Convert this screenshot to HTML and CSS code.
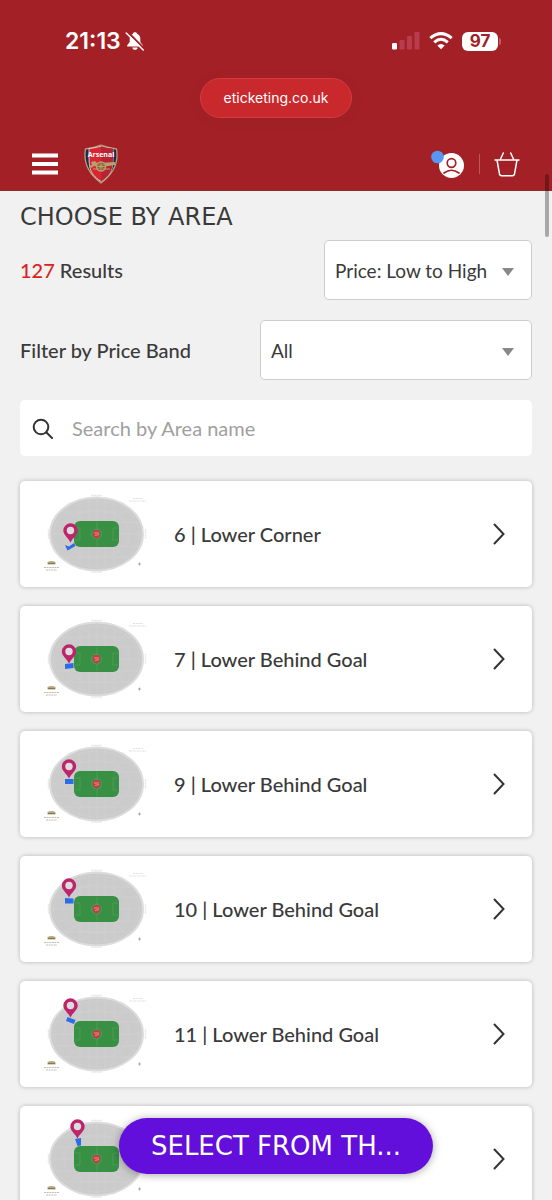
FILE: index.html
```html
<!DOCTYPE html>
<html lang="en">
<head>
    <meta charset="UTF-8">
    <meta name="viewport" content="width=device-width, initial-scale=1.0">
    <title>Choose by Area</title>
    <link rel="stylesheet" href="styles.css">
</head>
<body>
    <!-- Shared drawings -->
    <svg class="sprite" aria-hidden="true">
        <symbol id="stadium" viewBox="0 0 110 84">
            <ellipse cx="56.500" cy="42" rx="46.500" ry="36.500" fill="#cbcbcb" stroke="#dcdcdc" stroke-width="2"/>
            <g fill="none" stroke="#d3d3d3" stroke-width=".5">
                <path d="M40 10v64M49 7v70M57 7v70M65 7v70M74 10v64M22 20h69M14 30h85M12 42h89M14 54h85M22 65h69M25 16l63 52M88 16L25 68"/>
                <ellipse cx="56.500" cy="42" rx="43" ry="33"/>
                <ellipse cx="56.500" cy="42" rx="33" ry="24"/>
            </g>
            <rect x="34" y="29" width="45" height="26" rx="6" fill="#389044"/>
            <path d="M35 36h5v12h-5M78 36h-5v12h5M57 30v24" fill="none" stroke="#5da263" stroke-width=".6"/>
            <circle cx="56.500" cy="42" r="5" fill="none" stroke="#5da263" stroke-width=".6"/>
            <path d="M53 38.500q3.500-1 7 0q1 6-3.500 8.500q-4.500-2.500-3.500-8.500z" fill="#c93c42"/>
            <path d="M54 41h5M55 43.500l4-1" stroke="#e4a79b" stroke-width=".8"/>
            <path d="M51 3.500h11M51 80h11M8.500 37v10M105.500 37v10" stroke="#e6e6e6" stroke-width="1.500" stroke-dasharray="1.500 .5"/>
            <path d="M93 6.500h10M89 9h17" stroke="#e0e0e0" stroke-width="1.200" stroke-dasharray="2 .6"/>
            <path d="M7.500 70q4-2 8 0v2.500h-8z" fill="#b8a67d"/>
            <path d="M8 71.500h7" stroke="#746d50" stroke-width=".8"/>
            <path d="M4 75.500h15M6 78h11" stroke="#c6bdb0" stroke-dasharray="2 .6"/>
            <path d="M98 72h3M99.500 70.500v3" stroke="#999" stroke-width=".8"/>
        </symbol>
        <symbol id="pin" viewBox="0 0 16 20" overflow="visible">
            <path d="M8 19.500C6 15 .8 12 .8 7.500a7.200 7.200 0 0 1 14.400 0C15.200 12 10 15 8 19.500z" fill="#bd246c"/>
            <circle cx="8" cy="7.500" r="3.700" fill="#ddd"/>
        </symbol>
        <symbol id="chevron" viewBox="0 0 12 22">
            <path d="M1.500 1.500L10.500 11L1.500 20.500" fill="none" stroke="#333" stroke-width="2" stroke-linecap="round"/>
        </symbol>
    </svg>

    <div class="app">
        <header class="header">
            <div class="status">
                <span class="status-time">21:13</span>
                <svg class="icon-bell" width="20" height="20" viewBox="0 0 20 20">
                    <path d="M10 1.200c1.200 0 2 .7 2.300 1.700 2 .9 3 2.700 3 5v3.200l2.500 3.200v1.200H2.200v-1.200l2.500-3.200V7.900c0-2.300 1-4.100 3-5C8 1.900 8.800 1.200 10 1.200zM7.300 16.500h5.400c-.2 1.400-1.200 2.300-2.700 2.300s-2.500-.9-2.700-2.300z" fill="#fff"/>
                    <path d="M2.700 1L19.300 17.600" stroke="#a32126" stroke-width="2"/>
                    <path d="M1.200 2L18.200 19" stroke="#fff" stroke-width="1.500" stroke-linecap="round"/>
                </svg>
                <svg class="icon-signal" width="28" height="18" viewBox="0 0 28 18">
                    <rect x="0" y="11" width="5" height="6.500" rx="1.200" fill="#fff"/>
                    <g fill="#b83d4c">
                        <rect x="7.500" y="8" width="5" height="9.500" rx="1.200"/>
                        <rect x="15" y="4" width="5" height="13.500" rx="1.200"/>
                        <rect x="22.500" y="0" width="5" height="17.500" rx="1.200"/>
                    </g>
                </svg>
                <svg width="24" height="18" viewBox="0 0 24 18">
                    <g fill="none" stroke="#fff" stroke-width="3">
                        <path d="M1.300 6.200Q12-3 22.700 6.200"/>
                        <path d="M5.200 10.300Q12 4.300 18.800 10.300"/>
                    </g>
                    <path d="M8.300 13.500Q12 10.500 15.700 13.500L12 17.300z" fill="#fff"/>
                </svg>
                <span class="battery">97</span>
            </div>
            <a class="address" href="#">eticketing.co.uk</a>
            <nav class="nav">
                <button class="icon-button" aria-label="Menu">
                    <svg width="26" height="22" viewBox="0 0 26 22"><path d="M0 2.500h26M0 11h26M0 19.500h26" stroke="#fff" stroke-width="4"/></svg>
                </button>
                <a class="crest" href="#" aria-label="Home">
                    <svg width="34" height="40" viewBox="0 0 34 40">
                        <path d="M1.500 5Q9 4 17 1Q25 4 32.500 5Q36 25 17 39Q-2 25 1.500 5Z" fill="#192b55" stroke="#b9a16d" stroke-width="1.300"/>
                        <path d="M5 4.500Q11 4 17 2.200Q23 4 29 4.500C29 22 30 29 17 37.500C4 29 5 22 5 4.500Z" fill="#db2430" stroke="#eee" stroke-width=".8"/>
                        <path d="M17 2.200Q23 4 29 4.500C29 22 30 29 17 37.500Z" fill="#b82232"/>
                        <text x="17" y="12.500" text-anchor="middle" class="crest-text">Arsenal</text>
                        <path d="M7 18l4-1 2 2 18-1v3l-13 2-8-1-3 2-2-2 3-1z" fill="#b5a169"/>
                        <circle cx="17" cy="22.500" r="4.500" fill="#94533b" stroke="#b5a169" stroke-width="1.500"/>
                        <path d="M17 18v9M12.500 22.500h9M14 19.500l6 6M20 19.500l-6 6M9 25h4M20 25h6" stroke="#b5a169"/>
                    </svg>
                </a>
                <button class="icon-button account" aria-label="Account">
                    <svg width="34" height="30" viewBox="0 0 34 30">
                        <circle cx="20.500" cy="16.500" r="12.500" fill="#fff"/>
                        <g fill="none" stroke="#a32126" stroke-width="1.700" stroke-linecap="round">
                            <circle cx="20.500" cy="14" r="4.300"/>
                            <path d="M13 24Q20.500 18.500 28 24"/>
                        </g>
                        <circle cx="6.500" cy="8" r="6.300" fill="#5796f3"/>
                    </svg>
                </button>
                <span class="divider"></span>
                <button class="icon-button" aria-label="Basket">
                    <svg width="26" height="26" viewBox="0 0 26 26">
                        <path d="M1 9h24M3 9l2.500 14q.4 1.700 2 1.700h11q1.600 0 2-1.700L23 9M6.300 8.500l3-6.500M19.700 8.500l-3-6.500" fill="none" stroke="#fff" stroke-width="1.500" stroke-linecap="round"/>
                    </svg>
                </button>
            </nav>
        </header>

        <main class="main">
            <h1>CHOOSE BY AREA</h1>
            <div class="row">
                <label for="sort"><span class="count">127</span> Results</label>
                <span class="select select-sort">
                    <select id="sort"><option>Price: Low to High</option></select>
                </span>
            </div>
            <div class="row">
                <label for="band">Filter by Price Band</label>
                <span class="select select-band">
                    <select id="band"><option>All</option></select>
                </span>
            </div>
            <div class="search">
                <svg width="22" height="22" viewBox="0 0 22 22"><g fill="none" stroke="#333" stroke-width="2" stroke-linecap="round"><circle cx="9" cy="10" r="7.300"/><path d="M14.500 15.500l5.500 5.500"/></g></svg>
                <input type="text" placeholder="Search by Area name" aria-label="Search by Area name">
            </div>

            <div class="areas">
                <a class="area" href="#">
                    <svg class="map" viewBox="0 0 110 84"><use href="#stadium"/><path d="M25 53l4 1.500 5-3.500 1.500 3-8 4.500z" fill="#2e6ce5"/><use href="#pin" x="22.500" y="31" width="16" height="20"/></svg>
                    <span class="area-name">6 | Lower Corner</span>
                    <svg class="chevron"><use href="#chevron"/></svg>
                </a>
                <a class="area" href="#">
                    <svg class="map" viewBox="0 0 110 84"><use href="#stadium"/><path d="M25 47l8.500-1v5l-8.500 1z" fill="#2e6ce5"/><use href="#pin" x="21" y="27" width="16" height="20"/></svg>
                    <span class="area-name">7 | Lower Behind Goal</span>
                    <svg class="chevron"><use href="#chevron"/></svg>
                </a>
                <a class="area" href="#">
                    <svg class="map" viewBox="0 0 110 84"><use href="#stadium"/><path d="M25 37h8.500v5H25z" fill="#2e6ce5"/><use href="#pin" x="21" y="17" width="16" height="20"/></svg>
                    <span class="area-name">9 | Lower Behind Goal</span>
                    <svg class="chevron"><use href="#chevron"/></svg>
                </a>
                <a class="area" href="#">
                    <svg class="map" viewBox="0 0 110 84"><use href="#stadium"/><path d="M25 31l8.500.5v5H25z" fill="#2e6ce5"/><use href="#pin" x="21" y="11" width="16" height="20"/></svg>
                    <span class="area-name">10 | Lower Behind Goal</span>
                    <svg class="chevron"><use href="#chevron"/></svg>
                </a>
                <a class="area" href="#">
                    <svg class="map" viewBox="0 0 110 84"><use href="#stadium"/><path d="M27.500 25l8 3-1.500 4-8-3z" fill="#2e6ce5"/><use href="#pin" x="22.500" y="6" width="16" height="20"/></svg>
                    <span class="area-name">11 | Lower Behind Goal</span>
                    <svg class="chevron"><use href="#chevron"/></svg>
                </a>
                <a class="area" href="#" aria-label="Next area">
                    <svg class="map" viewBox="0 0 110 84"><use href="#stadium"/><path d="M35 22l6-1v7.500l-3.500.5z" fill="#2e6ce5"/><use href="#pin" x="29.500" y="2" width="16" height="20"/></svg>
                    <span class="area-name"></span>
                    <svg class="chevron"><use href="#chevron"/></svg>
                </a>
            </div>
        </main>
        <span class="scroll-thumb"></span>
        <button class="map-button">SELECT FROM TH...</button>
    </div>
</body>
</html>
```
FILE: styles.css
```css
* { box-sizing: border-box; }
body { margin: 0; font-family: Lato, "Open Sans", sans-serif; font-size: 20px; color: #3a3a3a; background-color: #f1f1f1; }
button, select, input { font: inherit; color: inherit; }
a { color: inherit; text-decoration: none; }
svg { display: block; flex: none; }
.sprite { position: absolute; width: 0; height: 0; }
.app { position: relative; display: flex; flex-direction: column; height: 100vh; overflow: hidden; }

/* Header */
.header { flex: none; display: flex; flex-direction: column; align-items: center; padding-top: 26px; background-color: #a32126; color: #fff; border-bottom: 1px solid #8e2d30; }
.status { display: flex; align-items: center; width: 100%; height: 30px; padding: 0 54px 0 65px; font-family: Inter, sans-serif; }
.status-time { font-size: 23px; font-weight: 600; }
.icon-bell { margin-left: 4px; }
.icon-signal { margin-left: auto; margin-right: 9px; }
.battery { position: relative; width: 36px; height: 19px; margin-left: 9px; border-radius: 6px; background-color: #fff; color: #a32126; font-size: 17px; font-weight: 700; line-height: 19px; text-align: center; }
.battery::after { content: ""; position: absolute; right: -3px; top: 6px; width: 2px; height: 7px; border-radius: 0 2px 2px 0; background-color: #bd5c64; }
.address { height: 40px; margin-top: 22px; padding: 0 23px; border: 1px solid #d93840; border-radius: 20px; background-color: #c9292d; box-shadow: 0 2px 16px rgba(0, 0, 0, 0.05); font-family: Inter, sans-serif; font-size: 14px; line-height: 38px; }
.nav { display: flex; align-items: center; width: 100%; padding: 26px 32px 6px; }
.icon-button { padding: 0; border: 0; background: none; cursor: pointer; }
.crest { margin-left: 26px; }
.crest-text { font: bold 7px "Open Sans", sans-serif; fill: #fff; }
.account { margin-left: auto; }
.divider { width: 1px; height: 20px; margin: 0 14px; background-color: #c25459; }

/* Filters */
.main { flex: 1; min-height: 0; overflow: hidden; padding: 11px 20px 0; }
h1 { margin: 0 0 8px; font-family: "DejaVu Sans", sans-serif; font-size: 24px; font-weight: 400; line-height: 30px; }
.row { display: flex; align-items: center; justify-content: space-between; height: 60px; margin-bottom: 20px; font-weight: 500; }
.count { color: #d9231f; }
.select { position: relative; height: 60px; font-size: 19px; font-weight: 400; }
.select::after { content: ""; position: absolute; right: 18px; top: 28px; border: 6px solid transparent; border-top: 8px solid #888; border-bottom: 0; }
.select-sort { width: 208px; }
.select-band { width: 272px; }
.select select { width: 100%; height: 100%; padding: 0 10px; border: 1px solid #ccc; border-radius: 5px; background-color: #fff; appearance: none; }
.search { display: flex; align-items: center; gap: 18px; height: 56px; padding: 0 12px; border-radius: 5px; background-color: #fff; }
.search input { flex: 1; min-width: 0; height: 100%; padding: 0; border: 0; outline: 0; background: none; }
.search input::placeholder { color: #a0a0a0; opacity: 1; }

/* Area list */
.areas { display: flex; flex-direction: column; gap: 19px; margin-top: 25px; }
.area { flex: none; display: flex; align-items: center; height: 106px; padding: 0 27px 0 20px; border-radius: 5px; background-color: #fff; box-shadow: 0 0 4px rgba(0, 0, 0, 0.25); font-weight: 500; }
.map { width: 110px; height: 84px; margin-right: 24px; }
.area-name { flex: 1; }
.chevron { width: 12px; height: 22px; }

.scroll-thumb { position: absolute; top: 174px; right: 3px; width: 4px; height: 63px; border-radius: 2px; background-color: rgba(0, 0, 0, 0.3); }
.map-button { position: absolute; left: 50%; bottom: 26px; transform: translateX(-50%); height: 56px; padding: 0 32px; border: 0; border-radius: 28px; background-color: #620fdb; color: #fff; box-shadow: 0 1px 8px rgba(0, 0, 0, 0.35); font-family: "DejaVu Sans", sans-serif; font-size: 26px; white-space: nowrap; cursor: pointer; }
```
